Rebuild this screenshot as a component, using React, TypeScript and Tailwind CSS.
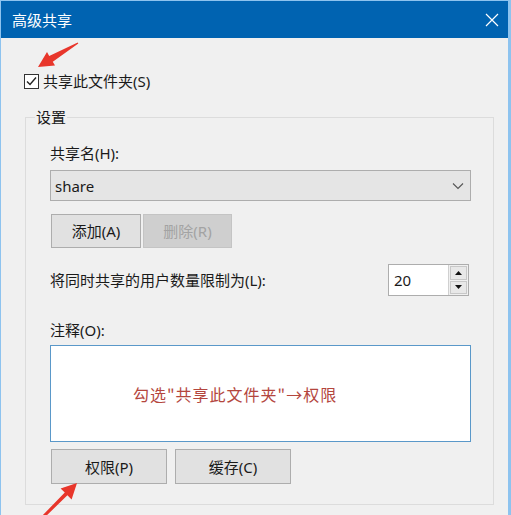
import React from "react";

const uiFont = {
  fontFamily: '"Segoe UI", "Noto Sans", "Noto Sans CJK SC", sans-serif',
};

function WinButton({
  label,
  disabled = false,
  className = "",
}: {
  label: string;
  disabled?: boolean;
  className?: string;
}) {
  return (
    <div
      className={
        "flex items-center justify-center border text-[15px] leading-5 " +
        (disabled
          ? "bg-[#cfcfcf] border-[#c4c4c4] text-[#a3a3a3] "
          : "bg-[#e1e1e1] border-[#adadad] text-[#1a1a1a] ") +
        className
      }
    >
      {label}
    </div>
  );
}

function Arrows() {
  // red hand-drawn pointer arrows laid over the dialog
  return (
    <svg
      className="absolute inset-0 pointer-events-none"
      width={511}
      height={515}
      viewBox="0 0 511 515"
    >
      <polygon
        fill="#e8362b"
        points="37,66 54,64.5 51.8,60.8 77.3,42.6 76.7,41.4 48.2,55 46,51"
      />
      <polygon
        fill="#e8362b"
        points="76,482 70.6,498.4 66.4,494.3 41,519 39,517 63.8,491.6 59.6,487.4"
      />
    </svg>
  );
}

export default function App() {
  return (
    <div
      className="relative w-[511px] h-[515px] overflow-hidden bg-[#f0f0f0] border-l border-r-[3px] border-t border-[#8dc3ef] text-[#1a1a1a]"
      style={uiFont}
    >
      <div className="flex h-[37px] items-center justify-between bg-[#0063b1] pl-[11px] pr-[9px] text-white">
        <span className="text-[15px] leading-5">高级共享</span>
        <svg width="14" height="14" viewBox="0 0 14 14">
          <path d="M1 1 L13 13 M13 1 L1 13" stroke="#ffffff" strokeWidth="1.2" fill="none" />
        </svg>
      </div>

      <div className="pl-[23px] pr-[14px] pt-[33px]">
        <div className="flex h-5 items-center gap-[4px]">
          <div className="flex h-[15px] w-[15px] items-center justify-center border border-[#333333] bg-white">
            <svg width="11" height="11" viewBox="0 0 11 11">
              <path d="M1 5.5 L4 8.5 L10 1.5" stroke="#222222" strokeWidth="1.4" fill="none" />
            </svg>
          </div>
          <span className="text-[15px] leading-5">共享此文件夹(S)</span>
        </div>

        <fieldset className="ml-[1px] mt-[16px] w-[469px] border border-[#dcdcdc] pl-[24px] pr-[22px] pb-[20px]">
          <legend className="-ml-[15px] px-[1px] text-[15px] leading-5">设置</legend>

          <div className="mt-[16px] text-[15px] leading-5">共享名(H):</div>

          <div className="mt-[7px] flex h-[31px] items-center justify-between border border-[#adadad] bg-[#e5e5e5] pl-[4px] pr-[6px]">
            <span className="text-[15px] leading-5">share</span>
            <svg width="12" height="8" viewBox="0 0 12 8">
              <path d="M1 1.5 L6 6.5 L11 1.5" stroke="#555555" strokeWidth="1.1" fill="none" />
            </svg>
          </div>

          <div className="mt-[13px] flex gap-[2px] pl-[1px]">
            <WinButton label="添加(A)" className="h-[34px] w-[90px]" />
            <WinButton label="删除(R)" disabled className="h-[34px] w-[89px]" />
          </div>

          <div className="mt-[16px] flex items-center justify-between pr-[2px]">
            <span className="text-[15px] leading-5">将同时共享的用户数量限制为(L):</span>
            <div className="flex h-[32px] w-[81px] border border-[#adadad] bg-white">
              <div className="flex flex-1 items-center pl-[5px] text-[15px] leading-5">20</div>
              <div className="flex w-[20px] flex-col gap-[1px] border-l border-[#d0d0d0] bg-[#f0f0f0] p-[1px]">
                <div className="flex flex-1 items-center justify-center border border-[#c8c8c8] bg-[#e8e8e8]">
                  <svg width="7" height="4" viewBox="0 0 7 4">
                    <path d="M0 4 L3.5 0 L7 4 Z" fill="#111111" />
                  </svg>
                </div>
                <div className="flex flex-1 items-center justify-center border border-[#c8c8c8] bg-[#e8e8e8]">
                  <svg width="7" height="4" viewBox="0 0 7 4">
                    <path d="M0 0 L7 0 L3.5 4 Z" fill="#111111" />
                  </svg>
                </div>
              </div>
            </div>
          </div>

          <div className="mt-[24px] text-[15px] leading-5">注释(O):</div>

          <div className="mt-[5px] flex h-[97px] items-center border border-[#5a98c9] bg-white pl-[82px]">
            <span
              className="text-[16px] leading-5 tracking-[1px] text-[#b4463e]"
              style={{ fontFamily: '"Noto Sans CJK SC", sans-serif' }}
            >
              勾选"共享此文件夹"→权限
            </span>
          </div>

          <div className="mt-[7px] flex gap-[8px] pl-[1px]">
            <WinButton label="权限(P)" className="h-[35px] w-[116px]" />
            <WinButton label="缓存(C)" className="h-[35px] w-[116px]" />
          </div>
        </fieldset>
      </div>

      <Arrows />
    </div>
  );
}
